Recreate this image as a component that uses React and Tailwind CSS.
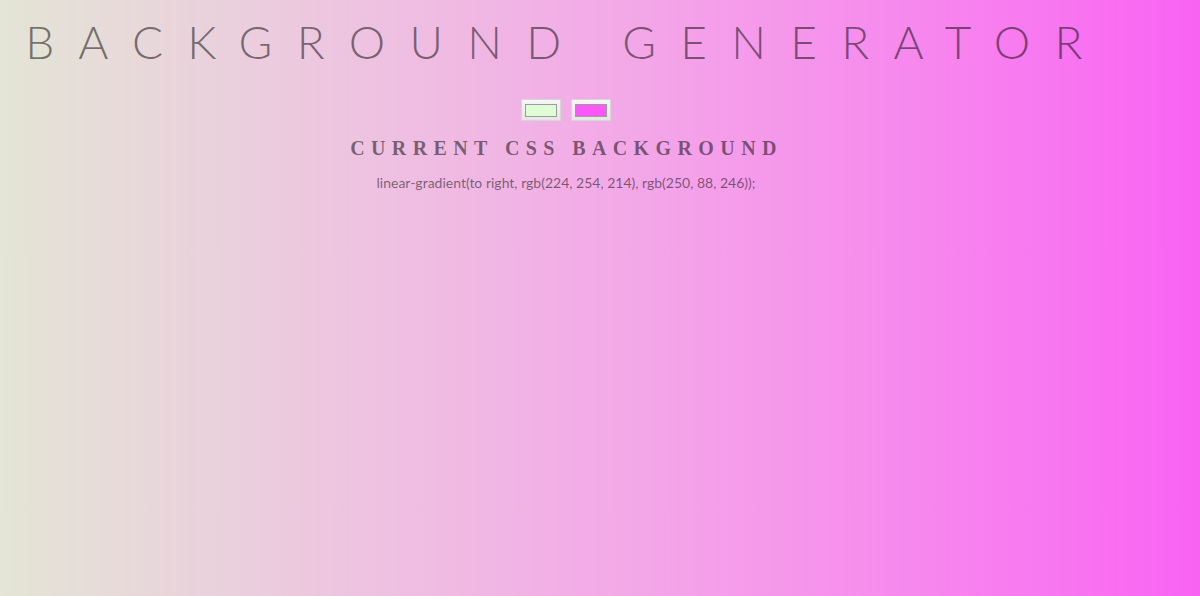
export default function App() {
  const c1 = 'rgb(224, 254, 214)';
  const c2 = 'rgb(250, 88, 246)';
  return (
    <div className="min-h-[596px] w-full bg-gradient-to-r from-[#e3e5d5] to-[#f962f3] text-black/50">
      <div className="w-[1132px] flex flex-col items-center text-center">
        <h1 className="mt-[14px] text-[46px] leading-[55px] font-light tracking-[24.3px] whitespace-nowrap font-['Lato',sans-serif]">
          BACKGROUND GENERATOR
        </h1>
        <div className="mt-[30px] flex gap-[10px]">
          <Swatch color="#e0fed6" />
          <Swatch color="#fa58f6" />
        </div>
        <h3 className="mt-[15px] text-[20px] leading-[24px] font-bold tracking-[6.4px] pl-[1px] font-['Liberation_Serif',serif]">
          CURRENT CSS BACKGROUND
        </h3>
        <p className="mt-[14px] text-[14px] leading-[18px] font-['Lato',sans-serif]">
          linear-gradient(to right, {c1}, {c2});
        </p>
      </div>
    </div>
  );
}

function Swatch({ color }) {
  return (
    <div className="w-[40px] h-[22px] border border-[#d6d6d6] bg-gradient-to-b from-[#f6f6f6] to-[#e6e6e6] flex items-center justify-center">
      <div className="w-[32px] h-[13px] border border-[#9c9c9c]" style={{ backgroundColor: color }} />
    </div>
  );
}
